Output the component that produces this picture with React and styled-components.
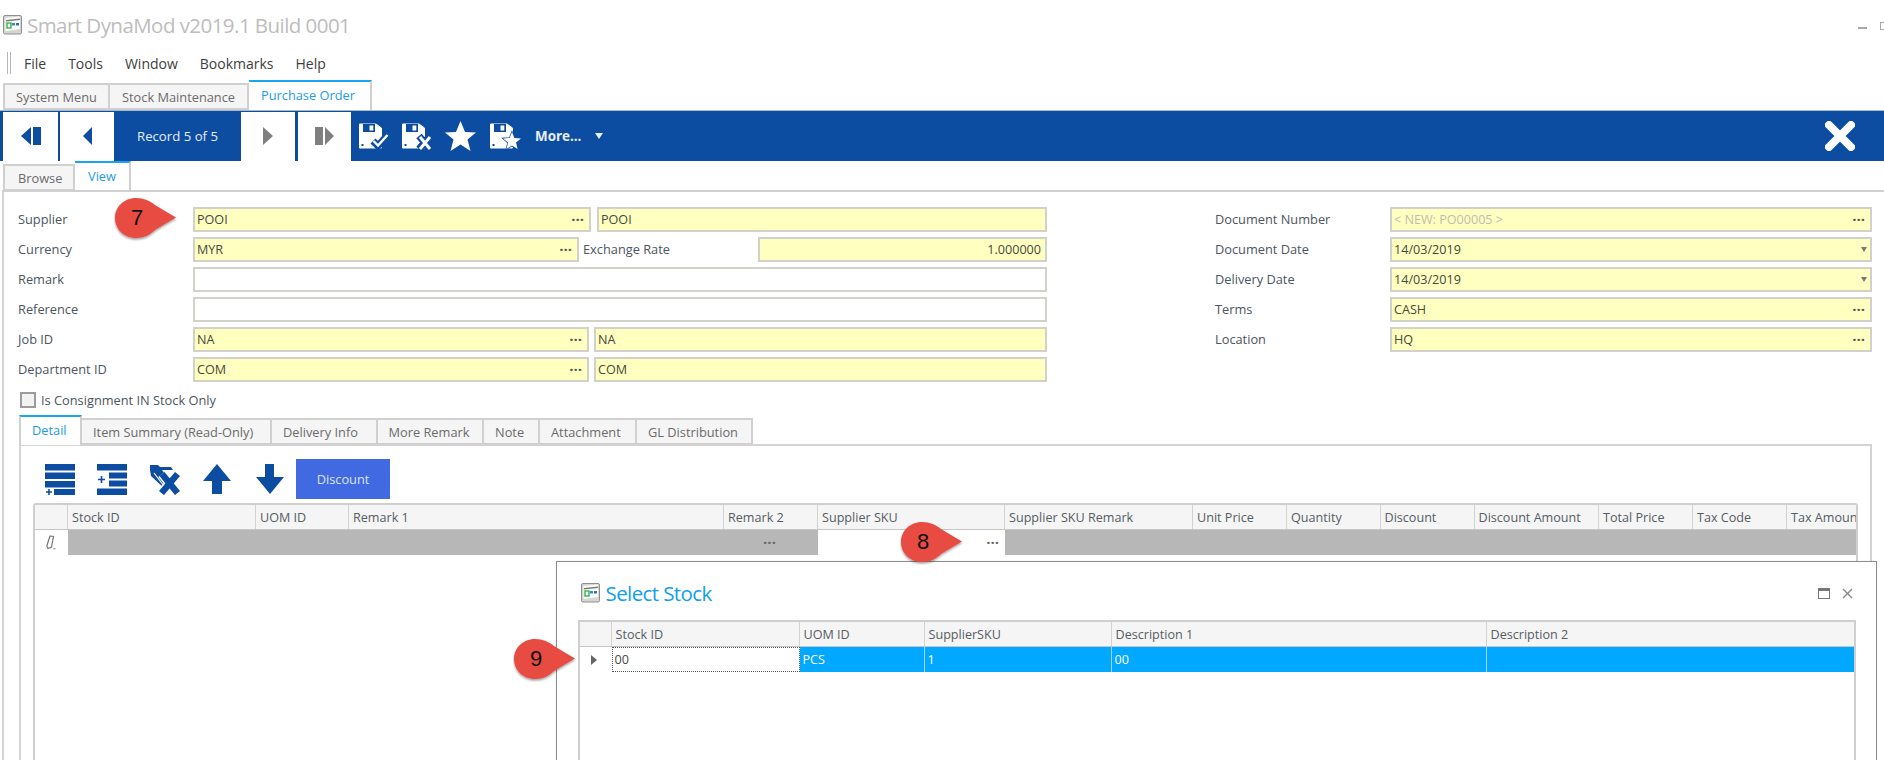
import React from "react";
import styled, { createGlobalStyle } from "styled-components";

const Global = createGlobalStyle`
  html, body { margin: 0; padding: 0; background: #fff; }
  * { box-sizing: border-box; }
`;

const FONT = `"Open Sans", "Noto Sans", "Liberation Sans", sans-serif`;

const Page = styled.div`
  position: relative;
  width: 1884px;
  height: 760px;
  overflow: hidden;
  background: #fff;
  font-family: ${FONT};
  font-size: 13px;
  color: #505050;
`;

const TitleBar = styled.div`
  position: relative;
  height: 48px;
  display: flex;
  align-items: center;
  gap: 5px;
  padding: 2px 0 0 3px;
`;
const TitleText = styled.div`
  font-size: 20.5px;
  color: #bdbdbd;
  letter-spacing: -0.55px;
`;
const WinCtl = styled.div`
  position: absolute;
  top: 22px;
  left: 1858px;
  width: 26px;
  height: 9px;
  overflow: hidden;
  display: flex;
  gap: 13px;
  align-items: flex-start;
`;
const WinMin = styled.span`
  width: 9px;
  height: 2px;
  margin-top: 5px;
  background: #a8a8a8;
  flex: none;
`;
const WinMax = styled.span`
  width: 8px;
  height: 8px;
  border: 1px solid #a8a8a8;
  flex: none;
`;

const MenuBar = styled.div`
  height: 32px;
  display: flex;
  align-items: center;
  padding: 0 0 2px 7px;
`;
const Grip = styled.div`
  width: 4px;
  height: 22px;
  border-left: 1px solid #b5b5b5;
  border-right: 1px solid #b5b5b5;
  margin-right: 13px;
`;
const MenuItem = styled.div`
  font-size: 14px;
  color: #3d3d3d;
  margin-right: 22px;
`;

const TabStrip = styled.div`
  display: flex;
  align-items: flex-end;
  height: ${(p) => p.$h}px;
  padding-left: ${(p) => p.$pad}px;
`;
const Tab = styled.div`
  width: ${(p) => p.$w}px;
  height: ${(p) => (p.$active ? p.$h + 3 : p.$h)}px;
  display: flex;
  align-items: center;
  padding-left: ${(p) => p.$tx}px;
  padding-bottom: ${(p) => (p.$active ? 3 : 0)}px;
  font-size: 12.8px;
  white-space: nowrap;
  color: ${(p) => (p.$active ? "#1d9be9" : "#6b6b6b")};
  background: ${(p) => (p.$active ? "#fff" : "#f5f5f5")};
  border: 2px solid #d0d0d0;
  border-left-width: ${(p) => (p.$first ? 2 : 0)}px;
  border-top-color: ${(p) => (p.$active ? "#1aa5f0" : "#d0d0d0")};
  border-bottom: ${(p) => (p.$active ? "none" : "2px solid #d0d0d0")};
`;

const Toolbar = styled.div`
  height: 51px;
  background: #0d4da1;
  display: flex;
  align-items: center;
  padding-left: 3px;
  border-top: 1px solid #a9b9cf;
`;
const NavBtn = styled.div`
  width: ${(p) => p.$w || 54}px;
  height: 49px;
  background: #fff;
  margin-right: ${(p) => p.$mr || 0}px;
  flex: none;
  display: flex;
  align-items: center;
  justify-content: center;
`;
const RecordText = styled.div`
  width: 127px;
  text-align: center;
  color: #e4ecf7;
  font-size: 13.2px;
  flex: none;
`;
const ToolIcons = styled.div`
  display: flex;
  align-items: center;
  margin-left: 7px;
`;
const IconSlot = styled.div`
  width: ${(p) => p.$w}px;
  display: flex;
  align-items: center;
`;
const More = styled.div`
  color: #e8eef8;
  font-weight: 700;
  font-size: 13.4px;
  width: 60px;
`;
const Spacer = styled.div`
  flex: 1;
`;
const CloseSlot = styled.div`
  width: 59px;
  display: flex;
`;

const Content = styled.div`
  margin-left: 2px;
  border-left: 2px solid #d4d4d4;
  height: 570px;
`;
const Form = styled.div`
  position: relative;
  border-top: 2px solid #d0d0d0;
  margin: -1px 0 0 -2px;
  padding: 15px 12px 0 16px;
  display: flex;
  justify-content: space-between;
  height: 226px;
`;
const LeftForm = styled.div`
  width: 1029px;
  display: flex;
  flex-direction: column;
  gap: 5px;
`;
const RightForm = styled.div`
  width: 657px;
  display: flex;
  flex-direction: column;
  gap: 5px;
`;
const Row = styled.div`
  display: flex;
  align-items: center;
  height: 25px;
`;
const Label = styled.div`
  width: ${(p) => p.$w || 175}px;
  padding-left: ${(p) => p.$pl || 0}px;
  padding-bottom: 2px;
  flex: none;
  font-size: 12.8px;
  color: #4c5560;
  white-space: nowrap;
`;
const Field = styled.div`
  height: 25px;
  flex: ${(p) => (p.$w ? `0 0 ${p.$w}px` : "1")};
  margin-left: ${(p) => p.$ml || 0}px;
  border: 2px solid #d2d2ca;
  background: ${(p) => (p.$plain ? "#fff" : "#ffffc0")};
  display: flex;
  align-items: center;
  justify-content: ${(p) => (p.$right ? "flex-end" : "space-between")};
  padding: 0 ${(p) => (p.$right ? 4 : 5)}px 0 2px;
  font-size: 12.6px;
  color: ${(p) => (p.$muted ? "#bdbdb0" : "#45493f")};
  white-space: nowrap;
`;
const Dots = styled.span`
  font-size: 15px;
  font-weight: 700;
  color: #555;
  line-height: 1;
`;
const Caret = styled.span`
  width: 0;
  height: 0;
  border-left: ${(p) => p.$half || 3.5}px solid transparent;
  border-right: ${(p) => p.$half || 3.5}px solid transparent;
  border-top: ${(p) => (p.$half ? p.$half + 1.5 : 5)}px solid ${(p) => p.$color || "#777"};
  margin-right: -2px;
`;
const CheckRow = styled.div`
  display: flex;
  align-items: center;
  gap: 5px;
  position: absolute;
  left: 18px;
  top: 199px;
  font-size: 12.8px;
  color: #4c5560;
`;
const CheckBox = styled.span`
  width: 16px;
  height: 16px;
  border: 2px solid #9c9c9c;
  background: #f2f2f2;
  display: block;
`;

const DetailWrap = styled.div`
  margin-left: 15px;
  width: 1853px;
`;
const DetailPanel = styled.div`
  border: 2px solid #d4d4d4;
  border-bottom: none;
  margin-top: -1px;
  height: 317px;
  padding: 13px 0 0 12px;
`;
const DetailTools = styled.div`
  display: flex;
  align-items: center;
  height: 40px;
  padding-left: 12px;
  margin-bottom: 4px;
`;
const ToolSlot = styled.div`
  width: ${(p) => p.$w}px;
  flex: none;
  display: flex;
  align-items: center;
`;
const DiscountBtn = styled.div`
  width: 94px;
  height: 40px;
  background: #4169e1;
  color: #dbe4fb;
  font-size: 12.8px;
  display: flex;
  align-items: center;
  justify-content: center;
`;

const DataGrid = styled.div`
  width: ${(p) => p.$w}px;
  height: 260px;
  border: 2px solid #cfcfcf;
  border-bottom: none;
  border-radius: ${(p) => (p.$round ? "3px 3px 0 0" : "0")};
  background: #fff;
  overflow: hidden;
`;
const HeaderRow = styled.div`
  display: flex;
  height: 25px;
  border-bottom: 1px solid #c6c6c6;
  background: #f5f5f5;
`;
const HeadCell = styled.div`
  flex: 0 0 ${(p) => p.$w}px;
  border-right: 1px solid #d2d2d2;
  padding-left: 4px;
  display: flex;
  align-items: center;
  font-size: 12.6px;
  color: #555c64;
  white-space: nowrap;
  overflow: hidden;
`;
const BodyRow = styled.div`
  display: flex;
  height: 25px;
`;
const Cell = styled.div`
  flex: 0 0 ${(p) => p.$w}px;
  background: ${(p) => p.$bg};
  color: ${(p) => p.$fg || "#fff"};
  display: flex;
  align-items: center;
  justify-content: ${(p) => (p.$dots ? "flex-end" : p.$center ? "center" : "flex-start")};
  padding: 0 ${(p) => (p.$dots ? 6 : 3)}px 0 ${(p) => (p.$center ? 0 : 3)}px;
  font-size: 12.6px;
  border-right: ${(p) => (p.$sep ? "1px solid #9fd8f7" : "none")};
  outline: ${(p) => (p.$focus ? "1px dotted #555" : "none")};
  outline-offset: -1px;
`;
const GreyDots = styled.span`
  font-size: 15px;
  font-weight: 700;
  color: #666;
  line-height: 1;
`;

const Popup = styled.div`
  position: absolute;
  left: 556px;
  top: 561px;
  width: 1321px;
  height: 210px;
  background: #fff;
  border: 1px solid #8e8e8e;
  padding-left: 20.5px;
  box-shadow: 0 0 1px rgba(0, 0, 0, 0.2);
`;
const PopupTitleRow = styled.div`
  position: relative;
  height: 58px;
  display: flex;
  align-items: center;
  gap: 6px;
  padding: 4px 0 0 3px;
`;
const PopupTitle = styled.div`
  font-size: 20.5px;
  color: #0ea0ee;
  letter-spacing: -0.6px;
`;
const PopupCtl = styled.div`
  position: absolute;
  left: 1240px;
  top: 26px;
  display: flex;
  align-items: center;
  gap: 12px;
`;
const Tri = styled.span`
  width: 0;
  height: 0;
  border-top: 5px solid transparent;
  border-bottom: 5px solid transparent;
  border-left: 6px solid #666;
`;

const Callout = styled.div`
  position: absolute;
  left: ${(p) => p.$x}px;
  top: ${(p) => p.$y}px;
  width: 66px;
  height: 44px;
`;
const CalloutNum = styled.span`
  position: absolute;
  left: 0;
  top: 0;
  width: 46px;
  height: 41px;
  display: flex;
  align-items: center;
  justify-content: center;
  font-family: "Liberation Sans", sans-serif;
  font-size: 22px;
  color: #111;
`;

const CalloutShape = () => (
  <svg width="66" height="44" viewBox="0 0 66 44">
    <defs>
      <filter id="cs" x="-20%" y="-20%" width="140%" height="150%">
        <feDropShadow dx="0" dy="1.5" stdDeviation="1.3" floodColor="#000" floodOpacity="0.4" />
      </filter>
    </defs>
    <path
      d="M22 1 C30 1 36 4 41 8 C49 13 56 17 62 20.5 C56 24 49 28 41 33 C36 38 30 41 22 41 C10 41 1 32 1 21 C1 10 10 1 22 1 Z"
      fill="#e84b42"
      filter="url(#cs)"
    />
  </svg>
);

const AppLogo = ({ size = 19 }) => (
  <svg width={size} height={size + 1} viewBox="0 0 19 20">
    <rect x="0.5" y="0.5" width="18" height="18.5" rx="1.5" fill="#d5d5d2" stroke="#8f8f8c" />
    <path d="M2.5 3 L17 1.5 L17 14 L2.5 16 Z" fill="#fff" />
    <path d="M3 5 L17 3.5 L17 5 L3 6.5 Z" fill="#7a7a76" />
    <rect x="4" y="8" width="4" height="5" fill="none" stroke="#35b34a" strokeWidth="1.4" />
    <rect x="9" y="8" width="3" height="2.5" fill="#2e8fd6" />
    <rect x="13" y="8" width="3" height="2.5" fill="#2e6fb6" />
  </svg>
);

const navPaths = {
  first: ["M10 0 V18 L0 9 Z M12 0 H20 V18 H12 Z", 20],
  prev: ["M9 0 V18 L0 9 Z", 9],
  next: ["M0 0 V18 L10 9 Z", 10],
  last: ["M0 0 H8 V18 H0 Z M10 0 V18 L19 9 Z", 19],
};
const NavIcon = ({ kind, color }) => {
  const [d, w] = navPaths[kind];
  return (
    <svg width={w} height="18" viewBox={`0 0 ${w} 18`}>
      <path d={d} fill={color} />
    </svg>
  );
};

const Floppy = ({ badge }) => (
  <svg width="32" height="27" viewBox="0 0 32 27">
    <path d="M1.5 1 H18 L23.5 5 V25 H1.5 Z" fill="#fff" stroke="#fff" strokeLinejoin="round" />
    <rect x="5" y="1" width="12" height="8" fill="#0d4da1" />
    <rect x="11.5" y="2.5" width="3.8" height="5" fill="#fff" />
    <rect x="3.5" y="21" width="2" height="2" fill="#0d4da1" />
    {badge === "check" && (
      <path d="M15 18 L20 23 L29.5 12" fill="none" stroke="#0d4da1" strokeWidth="7" />
    )}
    {badge === "check" && (
      <path d="M15.5 18 L20 22.5 L29.5 12" fill="none" stroke="#fff" strokeWidth="2.4" />
    )}
    {badge === "x" && <path d="M18 13 L29 26 M29 13 L18 26" stroke="#0d4da1" strokeWidth="7" />}
    {badge === "x" && <path d="M19 14 L29 26 M29 14 L19 26" stroke="#fff" strokeWidth="3" />}
    {badge === "star" && (
      <path
        d="M23 9 L25.4 15 L32 15.4 L27 19.6 L28.6 26 L23 22.6 L17.4 26 L19 19.6 L14 15.4 L20.6 15 Z"
        fill="#fff"
        stroke="#0d4da1"
        strokeWidth="1.4"
        paintOrder="stroke"
      />
    )}
  </svg>
);

const BigStar = () => (
  <svg width="31" height="30" viewBox="0 0 31 30">
    <path d="M15.5 0 L20 11 L31 11.5 L22.5 18.5 L25.5 30 L15.5 23.5 L5.5 30 L8.5 18.5 L0 11.5 L11 11 Z" fill="#fff" />
  </svg>
);

const B = "#0d4da1";
const IconRowsPlusBottom = () => (
  <svg width="30" height="31" viewBox="0 0 30 31">
    <rect x="0" y="0" width="30" height="6.5" fill={B} />
    <rect x="0" y="8.5" width="30" height="6.5" fill={B} />
    <rect x="0" y="17" width="30" height="6.5" fill={B} />
    <rect x="9" y="25" width="21" height="6" fill={B} />
    <path d="M1 28 H7 M4 25 V31" stroke={B} strokeWidth="1.6" />
  </svg>
);
const IconRowsPlusMid = () => (
  <svg width="30" height="31" viewBox="0 0 30 31">
    <rect x="0" y="0" width="30" height="6.5" fill={B} />
    <rect x="12" y="8.5" width="18" height="6" fill={B} />
    <rect x="12" y="16.5" width="18" height="6" fill={B} />
    <rect x="0" y="24.5" width="30" height="6.5" fill={B} />
    <path d="M1 15.5 H8 M4.5 12 V19" stroke={B} strokeWidth="1.6" />
  </svg>
);
const IconFolderX = () => (
  <svg width="30" height="31" viewBox="0 0 30 31">
    <path d="M0 1 H8 L10 3 H21 L23 6 H9 L0 6 Z" fill={B} />
    <path d="M0 6 H12 L24 22 L14 24 L1 12 Z" fill={B} />
    <path d="M4 9 L14 22" stroke="#fff" strokeWidth="1.2" />
    <path d="M12 10 L27.5 29 M27.5 10 L11.5 29" stroke="#fff" strokeWidth="9.5" />
    <path d="M12 10 L27.5 29 M27.5 10 L11.5 29" stroke={B} strokeWidth="6.5" />
  </svg>
);
const IconUp = () => (
  <svg width="28" height="30" viewBox="0 0 28 30">
    <path d="M14 0 L28 17 H19 V30 H9 V17 H0 Z" fill={B} />
  </svg>
);
const IconDown = () => (
  <svg width="28" height="30" viewBox="0 0 28 30">
    <path d="M9 0 H18 V13 H28 L14 30 L0 13 H9 Z" fill={B} />
  </svg>
);
const Pencil = () => (
  <svg width="11" height="15" viewBox="0 0 11 15">
    <path d="M5 1 L8.5 1.5 L6.5 12 L3 13.5 L1.8 11 Z" fill="none" stroke="#777" strokeWidth="1.2" />
    <path d="M8.5 13.8 H10.5" stroke="#888" strokeWidth="1.2" />
  </svg>
);

const detailCols = [
  ["", 33],
  ["Stock ID", 188],
  ["UOM ID", 93],
  ["Remark 1", 375],
  ["Remark 2", 94],
  ["Supplier SKU", 187],
  ["Supplier SKU Remark", 188],
  ["Unit Price", 94],
  ["Quantity", 93.5],
  ["Discount", 94],
  ["Discount Amount", 124.5],
  ["Total Price", 94],
  ["Tax Code", 94],
  ["Tax Amount", 72],
];
const GREY = "#b7b7b7";

const stockCols = [
  ["", 32],
  ["Stock ID", 188],
  ["UOM ID", 125],
  ["SupplierSKU", 187],
  ["Description 1", 375],
  ["Description 2", 369],
];
const BLUE = "#00a8ff";

const tabs1 = [
  ["System Menu", 107, 11],
  ["Stock Maintenance", 139, 12],
  ["Purchase Order", 123, 12, true],
];
const subTabs = [
  ["Detail", 63, 11, true],
  ["Item Summary (Read-Only)", 190, 11],
  ["Delivery Info", 105.5, 11],
  ["More Remark", 106.5, 11],
  ["Note", 56, 11],
  ["Attachment", 97, 11],
  ["GL Distribution", 116, 11],
];

const Notes = [
  ["7", 114, 197],
  ["8", 900, 521],
  ["9", 513, 638],
];

export default function App() {
  return (
    <Page>
      <Global />
      <TitleBar>
        <AppLogo />
        <TitleText>Smart DynaMod v2019.1 Build 0001</TitleText>
        <WinCtl>
          <WinMin />
          <WinMax />
        </WinCtl>
      </TitleBar>
      <MenuBar>
        <Grip />
        {["File", "Tools", "Window", "Bookmarks", "Help"].map((m) => (
          <MenuItem key={m}>{m}</MenuItem>
        ))}
      </MenuBar>
      <TabStrip $h={30} $pad={3}>
        {tabs1.map(([t, w, tx, a], i) => (
          <Tab key={t} $w={w} $tx={tx} $active={a} $h={27} $first={i === 0}>
            {t}
          </Tab>
        ))}
      </TabStrip>
      <Toolbar>
        <NavBtn $w={55} $mr={2}>
          <NavIcon kind="first" color={B} />
        </NavBtn>
        <NavBtn>
          <NavIcon kind="prev" color={B} />
        </NavBtn>
        <RecordText>Record 5 of 5</RecordText>
        <NavBtn $mr={3}>
          <NavIcon kind="next" color="#7f7f7f" />
        </NavBtn>
        <NavBtn $w={53}>
          <NavIcon kind="last" color="#7f7f7f" />
        </NavBtn>
        <ToolIcons>
          <IconSlot $w={43}>
            <Floppy badge="check" />
          </IconSlot>
          <IconSlot $w={44}>
            <Floppy badge="x" />
          </IconSlot>
          <IconSlot $w={44}>
            <BigStar />
          </IconSlot>
          <IconSlot $w={46}>
            <Floppy badge="star" />
          </IconSlot>
          <More>More...</More>
          <Caret $color="#e8eef8" $half={4.5} />
        </ToolIcons>
        <Spacer />
        <CloseSlot>
          <svg width="30" height="30" viewBox="0 0 30 30">
            <path d="M4 4 L26 26 M26 4 L4 26" stroke="#fff" strokeWidth="8" strokeLinecap="round" />
          </svg>
        </CloseSlot>
      </Toolbar>
      <TabStrip $h={30} $pad={3}>
        {[
          ["Browse", 72, 13],
          ["View", 56, 13, true],
        ].map(([t, w, tx, a], i) => (
          <Tab key={t} $w={w} $tx={tx} $active={a} $h={27} $first={i === 0}>
            {t}
          </Tab>
        ))}
      </TabStrip>
      <Content>
        <Form>
          <LeftForm>
            <Row>
              <Label>Supplier</Label>
              <Field $w={398}>
                POOI<Dots>···</Dots>
              </Field>
              <Field $ml={6}>POOI</Field>
            </Row>
            <Row>
              <Label>Currency</Label>
              <Field $w={386}>
                MYR<Dots>···</Dots>
              </Field>
              <Label $w={179} $pl={4}>
                Exchange Rate
              </Label>
              <Field $right>1.000000</Field>
            </Row>
            <Row>
              <Label>Remark</Label>
              <Field $plain />
            </Row>
            <Row>
              <Label>Reference</Label>
              <Field $plain />
            </Row>
            <Row>
              <Label>Job ID</Label>
              <Field $w={396}>
                NA<Dots>···</Dots>
              </Field>
              <Field $ml={5}>NA</Field>
            </Row>
            <Row>
              <Label>Department ID</Label>
              <Field $w={396}>
                COM<Dots>···</Dots>
              </Field>
              <Field $ml={5}>COM</Field>
            </Row>
          </LeftForm>
          <RightForm>
            <Row>
              <Label>Document Number</Label>
              <Field $muted>
                {"< NEW: PO00005 >"}
                <Dots>···</Dots>
              </Field>
            </Row>
            <Row>
              <Label>Document Date</Label>
              <Field>
                14/03/2019
                <Caret />
              </Field>
            </Row>
            <Row>
              <Label>Delivery Date</Label>
              <Field>
                14/03/2019
                <Caret />
              </Field>
            </Row>
            <Row>
              <Label>Terms</Label>
              <Field>
                CASH<Dots>···</Dots>
              </Field>
            </Row>
            <Row>
              <Label>Location</Label>
              <Field>
                HQ<Dots>···</Dots>
              </Field>
            </Row>
          </RightForm>
          <CheckRow>
            <CheckBox />
            Is Consignment IN Stock Only
          </CheckRow>
        </Form>
        <DetailWrap>
          <TabStrip $h={29} $pad={0}>
            {subTabs.map(([t, w, tx, a], i) => (
              <Tab key={t} $w={w} $tx={tx} $active={a} $h={27} $first={i === 0}>
                {t}
              </Tab>
            ))}
          </TabStrip>
          <DetailPanel>
            <DetailTools>
              <ToolSlot $w={52}>
                <IconRowsPlusBottom />
              </ToolSlot>
              <ToolSlot $w={53}>
                <IconRowsPlusMid />
              </ToolSlot>
              <ToolSlot $w={53}>
                <IconFolderX />
              </ToolSlot>
              <ToolSlot $w={53}>
                <IconUp />
              </ToolSlot>
              <ToolSlot $w={40}>
                <IconDown />
              </ToolSlot>
              <DiscountBtn>Discount</DiscountBtn>
            </DetailTools>
            <DataGrid $w={1825} $round>
              <HeaderRow>
                {detailCols.map(([t, w], i) => (
                  <HeadCell key={i} $w={w}>
                    {t}
                  </HeadCell>
                ))}
              </HeaderRow>
              <BodyRow>
                <Cell $w={33} $bg="#fff" $center>
                  <Pencil />
                </Cell>
                {detailCols.slice(1).map(([t, w]) =>
                  t === "Remark 2" ? (
                    <Cell key={t} $w={w} $bg={GREY} $center>
                      <GreyDots>···</GreyDots>
                    </Cell>
                  ) : t === "Supplier SKU" ? (
                    <Cell key={t} $w={w} $bg="#fff" $dots>
                      <GreyDots>···</GreyDots>
                    </Cell>
                  ) : (
                    <Cell key={t} $w={w} $bg={GREY} />
                  )
                )}
              </BodyRow>
            </DataGrid>
          </DetailPanel>
        </DetailWrap>
      </Content>

      <Popup>
        <PopupTitleRow>
          <AppLogo />
          <PopupTitle>Select Stock</PopupTitle>
          <PopupCtl>
            <svg width="12" height="11" viewBox="0 0 12 11">
              <rect x="0.5" y="0.5" width="11" height="10" fill="none" stroke="#777" />
              <rect x="0.5" y="0.5" width="11" height="2.5" fill="#777" />
            </svg>
            <svg width="11" height="11" viewBox="0 0 11 11">
              <path d="M1 1 L10 10 M10 1 L1 10" stroke="#888" strokeWidth="1.4" />
            </svg>
          </PopupCtl>
        </PopupTitleRow>
        <DataGrid $w={1278}>
          <HeaderRow>
            {stockCols.map(([t, w], i) => (
              <HeadCell key={i} $w={w}>
                {t}
              </HeadCell>
            ))}
          </HeaderRow>
          <BodyRow>
            <Cell $w={32} $bg="#fff" $center>
              <Tri />
            </Cell>
            <Cell $w={188} $bg="#fff" $fg="#45493f" $focus>
              00
            </Cell>
            <Cell $w={125} $bg={BLUE} $sep>
              PCS
            </Cell>
            <Cell $w={187} $bg={BLUE} $sep>
              1
            </Cell>
            <Cell $w={375} $bg={BLUE} $sep>
              00
            </Cell>
            <Cell $w={369} $bg={BLUE} />
          </BodyRow>
        </DataGrid>
      </Popup>

      {Notes.map(([n, x, y]) => (
        <Callout key={n} $x={x} $y={y}>
          <CalloutShape />
          <CalloutNum>{n}</CalloutNum>
        </Callout>
      ))}
    </Page>
  );
}
